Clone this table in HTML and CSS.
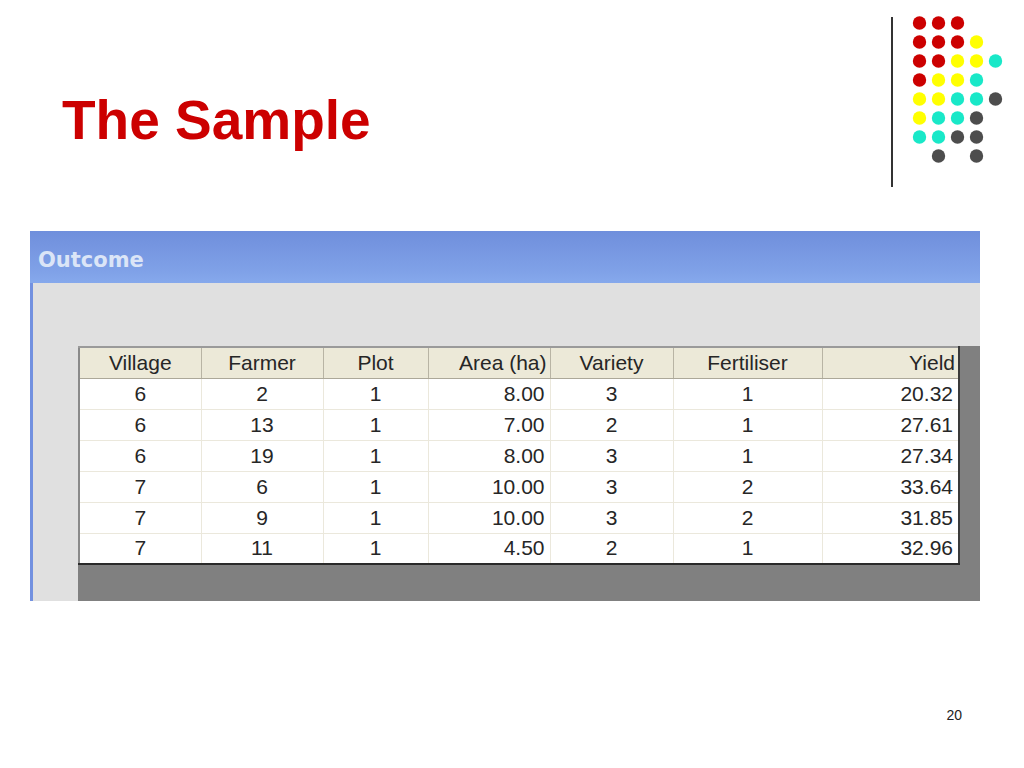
FILE: index.html
```html
<!DOCTYPE html>
<html lang="en">
<head>
<meta charset="utf-8">
<title>The Sample</title>
<link rel="stylesheet" href="styles.css">
</head>
<body>
<div class="slide">
  <header class="head">
    <h1 class="title">The Sample</h1>
    <div class="deco">
      <div class="vline"></div>
      <svg class="dots" width="120" height="170" viewBox="0 0 120 170" aria-hidden="true">
        <g fill="#cc0000">
          <circle cx="26.5" cy="13" r="6.7"/><circle cx="45.5" cy="13" r="6.7"/><circle cx="64.5" cy="13" r="6.7"/>
          <circle cx="26.5" cy="32" r="6.7"/><circle cx="45.5" cy="32" r="6.7"/><circle cx="64.5" cy="32" r="6.7"/>
          <circle cx="26.5" cy="51" r="6.7"/><circle cx="45.5" cy="51" r="6.7"/>
          <circle cx="26.5" cy="70" r="6.7"/>
        </g>
        <g fill="#ffff00">
          <circle cx="83.5" cy="32" r="6.7"/>
          <circle cx="64.5" cy="51" r="6.7"/><circle cx="83.5" cy="51" r="6.7"/>
          <circle cx="45.5" cy="70" r="6.7"/><circle cx="64.5" cy="70" r="6.7"/>
          <circle cx="26.5" cy="89" r="6.7"/><circle cx="45.5" cy="89" r="6.7"/>
          <circle cx="26.5" cy="108" r="6.7"/>
        </g>
        <g fill="#19e8c8">
          <circle cx="102.5" cy="51" r="6.7"/>
          <circle cx="83.5" cy="70" r="6.7"/>
          <circle cx="64.5" cy="89" r="6.7"/><circle cx="83.5" cy="89" r="6.7"/>
          <circle cx="45.5" cy="108" r="6.7"/><circle cx="64.5" cy="108" r="6.7"/>
          <circle cx="26.5" cy="127" r="6.7"/><circle cx="45.5" cy="127" r="6.7"/>
        </g>
        <g fill="#4d4d4d">
          <circle cx="102.5" cy="89" r="6.7"/>
          <circle cx="83.5" cy="108" r="6.7"/>
          <circle cx="64.5" cy="127" r="6.7"/><circle cx="83.5" cy="127" r="6.7"/>
          <circle cx="45.5" cy="146" r="6.7"/><circle cx="83.5" cy="146" r="6.7"/>
        </g>
      </svg>
    </div>
  </header>

  <section class="window">
    <div class="titlebar">Outcome</div>
    <div class="client">
      <div class="grid-area">
        <table class="grid">
          <colgroup>
            <col class="c-village"><col class="c-farmer"><col class="c-plot"><col class="c-area"><col class="c-variety"><col class="c-fert"><col class="c-yield">
          </colgroup>
          <thead>
            <tr>
              <th>Village</th><th>Farmer</th><th>Plot</th><th class="r">Area (ha)</th><th>Variety</th><th>Fertiliser</th><th class="r">Yield</th>
            </tr>
          </thead>
          <tbody>
            <tr><td>6</td><td>2</td><td>1</td><td class="r">8.00</td><td>3</td><td>1</td><td class="r">20.32</td></tr>
            <tr><td>6</td><td>13</td><td>1</td><td class="r">7.00</td><td>2</td><td>1</td><td class="r">27.61</td></tr>
            <tr><td>6</td><td>19</td><td>1</td><td class="r">8.00</td><td>3</td><td>1</td><td class="r">27.34</td></tr>
            <tr><td>7</td><td>6</td><td>1</td><td class="r">10.00</td><td>3</td><td>2</td><td class="r">33.64</td></tr>
            <tr><td>7</td><td>9</td><td>1</td><td class="r">10.00</td><td>3</td><td>2</td><td class="r">31.85</td></tr>
            <tr><td>7</td><td>11</td><td>1</td><td class="r">4.50</td><td>2</td><td>1</td><td class="r">32.96</td></tr>
          </tbody>
        </table>
      </div>
    </div>
  </section>

  <footer class="foot">
    <span class="pagenum">20</span>
  </footer>
</div>
</body>
</html>
```

FILE: styles.css
```css
* { box-sizing: border-box; }

html, body {
  margin: 0;
  padding: 0;
  background: #ffffff;
}

body {
  font-family: "Liberation Sans", Arial, sans-serif;
  color: #000;
}

.slide {
  width: 1024px;
  height: 768px;
  display: flex;
  flex-direction: column;
  overflow: hidden;
}

/* ---------- header ---------- */
.head {
  height: 231px;
  display: flex;
  align-items: flex-start;
}

.title {
  margin: 0;
  padding: 93px 0 0 62px;
  font-family: "Liberation Sans", Arial, sans-serif;
  font-weight: bold;
  font-size: 55px;
  line-height: 55px;
  color: #cc0000;
}

.deco {
  margin-left: auto;
  width: 133px;
  display: flex;
  align-items: flex-start;
  padding-top: 10px;
}

.vline {
  width: 2px;
  height: 170px;
  margin-top: 7px;
  background: #333333;
}

.dots {
  display: block;
  flex: none;
}

/* ---------- window ---------- */
.window {
  margin-left: 30px;
  width: 950px;
  height: 370px;
  display: flex;
  flex-direction: column;
}

.titlebar {
  height: 52px;
  padding: 17px 0 0 8px;
  background: linear-gradient(180deg, #6f8fdc 0%, #7898e2 40%, #80a2e8 80%, #86a9ec 100%);
  font-family: "DejaVu Sans", Verdana, sans-serif;
  font-weight: bold;
  font-size: 21px;
  line-height: 24px;
  color: #dbe5f7;
}

.client {
  flex: 1;
  display: flex;
  flex-direction: column;
  background: #e0e0e0;
  border-left: 3px solid #7391e0;
  padding: 63px 0 0 45px;
}

.grid-area {
  flex: 1;
  background: #808080;
}

/* ---------- grid ---------- */
.grid {
  border-collapse: collapse;
  table-layout: fixed;
  width: 882px;
  font-family: "Liberation Sans", Arial, sans-serif;
  font-size: 21px;
  color: #262626;
  background: #ffffff;
  border-top: 2px solid #9a9a9a;
  border-left: 2px solid #8a8a8a;
  border-right: 2px solid #3a3a3a;
  border-bottom: 2px solid #2a2a2a;
}

.c-village { width: 122px; }
.c-farmer { width: 122px; }
.c-plot { width: 105px; }
.c-area { width: 122px; }
.c-variety { width: 123px; }
.c-fert { width: 149px; }
.c-yield { width: 137px; }

.grid th {
  height: 31px;
  padding: 0 3px;
  font-weight: normal;
  text-align: center;
  background: #ece9d8;
  border-right: 1px solid #b8b4a4;
  border-bottom: 1px solid #aca899;
  line-height: 28px;
  white-space: nowrap;
}

.grid td {
  height: 31px;
  padding: 0 6px;
  text-align: center;
  border-right: 1px solid #ebe8dc;
  border-bottom: 1px solid #ebe8dc;
  line-height: 28px;
}

.grid th.r { text-align: right; padding-right: 3px; }
.grid td.r { text-align: right; padding-right: 5px; }

.grid tbody tr:last-child td { border-bottom: none; }
.grid th:last-child, .grid td:last-child { border-right: none; }

/* ---------- footer ---------- */
.foot {
  flex: 1;
  display: flex;
  justify-content: flex-end;
  padding: 106px 62px 0 0;
}

.pagenum {
  font-family: "Liberation Sans", Arial, sans-serif;
  font-size: 14px;
  line-height: 16px;
  color: #222;
}
```
